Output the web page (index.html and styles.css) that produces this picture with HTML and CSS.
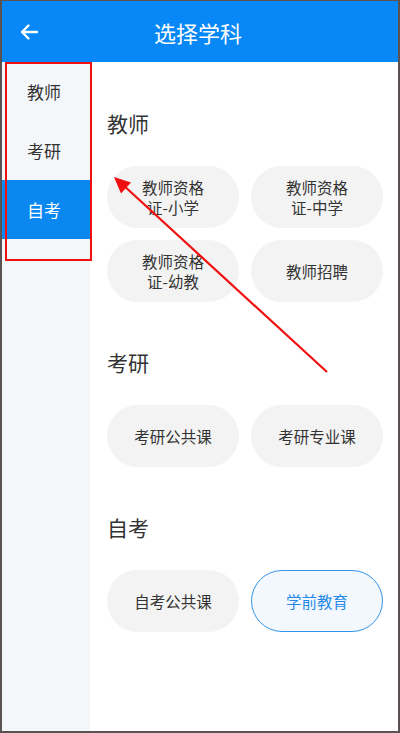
FILE: index.html
```html
<!DOCTYPE html>
<html>
<head>
    <meta charset="utf-8">
    <link rel="stylesheet" href="styles.css">
</head>
<body>
    <div class="frame">
        <header class="topbar">
            <svg class="back" width="20" height="18" viewBox="0 0 20 18">
                <path d="M18 9H3M9.5 2.5L3 9l6.5 6.5" fill="none" stroke="#fff" stroke-width="2.4" stroke-linecap="round" stroke-linejoin="round"/>
            </svg>
            <h1>选择学科</h1>
        </header>
        <div class="main">
            <nav class="sidebar">
                <div class="side-item">教师</div>
                <div class="side-item">考研</div>
                <div class="side-item active">自考</div>
            </nav>
            <div class="content">
                <section class="group">
                    <h2>教师</h2>
                    <div class="chips">
                        <div class="chip">教师资格<br>证-小学</div>
                        <div class="chip">教师资格<br>证-中学</div>
                        <div class="chip">教师资格<br>证-幼教</div>
                        <div class="chip">教师招聘</div>
                    </div>
                </section>
                <section class="group">
                    <h2>考研</h2>
                    <div class="chips">
                        <div class="chip">考研公共课</div>
                        <div class="chip">考研专业课</div>
                    </div>
                </section>
                <section class="group">
                    <h2>自考</h2>
                    <div class="chips">
                        <div class="chip">自考公共课</div>
                        <div class="chip selected">学前教育</div>
                    </div>
                </section>
            </div>
        </div>

        <!-- annotation overlay -->
        <div class="mark-box"></div>
        <svg class="mark-arrow" width="400" height="733" viewBox="0 0 400 733">
            <line x1="327" y1="372" x2="122" y2="184" stroke="#f01010" stroke-width="2.2"/>
            <polygon points="114,177 121,193.5 131,182.5" fill="#f01010"/>
        </svg>
    </div>
</body>
</html>
```

FILE: styles.css
```css
body {
    margin: 0;
    font-family: "Noto Sans CJK SC", "Noto Sans", sans-serif;
    color: #333;
}

.frame {
    width: 400px;
    height: 733px;
    box-sizing: border-box;
    border: 2px solid #5a5252;
    border-top-width: 1px;
    display: flex;
    flex-direction: column;
    position: relative;
    overflow: hidden;
}

.topbar {
    height: 61px;
    flex-shrink: 0;
    background: #0788f6;
    display: flex;
    align-items: center;
    justify-content: center;
    position: relative;
}

.topbar h1 {
    margin: 0 0 0 -4px;
    font-size: 22px;
    font-weight: 400;
    color: #fff;
}

.back {
    position: absolute;
    left: 17px;
    top: 22px;
}

.main {
    flex: 1;
    display: flex;
}

.sidebar {
    width: 88px;
    background: #f4f7fa;
}

.side-item {
    height: 59px;
    padding-right: 4px;
    display: flex;
    align-items: center;
    justify-content: center;
    font-size: 17px;
    color: #333;
}

.side-item.active {
    background: #0a88f0;
    color: #fff;
}

.content {
    flex: 1;
    padding: 47px 0 0 17px;
}

.group + .group {
    margin-top: 46px;
}

.group h2 {
    margin: 0 0 29px;
    font-size: 21px;
    line-height: 28px;
    font-weight: 400;
    color: #333;
}

.chips {
    display: grid;
    grid-template-columns: 132px 132px;
    gap: 12px;
}

.chip {
    height: 62px;
    box-sizing: border-box;
    border-radius: 31px;
    background: #f3f3f3;
    display: flex;
    align-items: center;
    justify-content: center;
    text-align: center;
    font-size: 15.5px;
    line-height: 20px;
    color: #333;
}

.chip.selected {
    background: #f3f8ff;
    border: 1.5px solid #3593e6;
    color: #2489e6;
}

.mark-box {
    position: absolute;
    left: 3px;
    top: 61px;
    width: 83px;
    height: 195px;
    border: 2px solid #f01010;
}

.mark-arrow {
    position: absolute;
    left: -2px;
    top: -1px;
    pointer-events: none;
}
```
